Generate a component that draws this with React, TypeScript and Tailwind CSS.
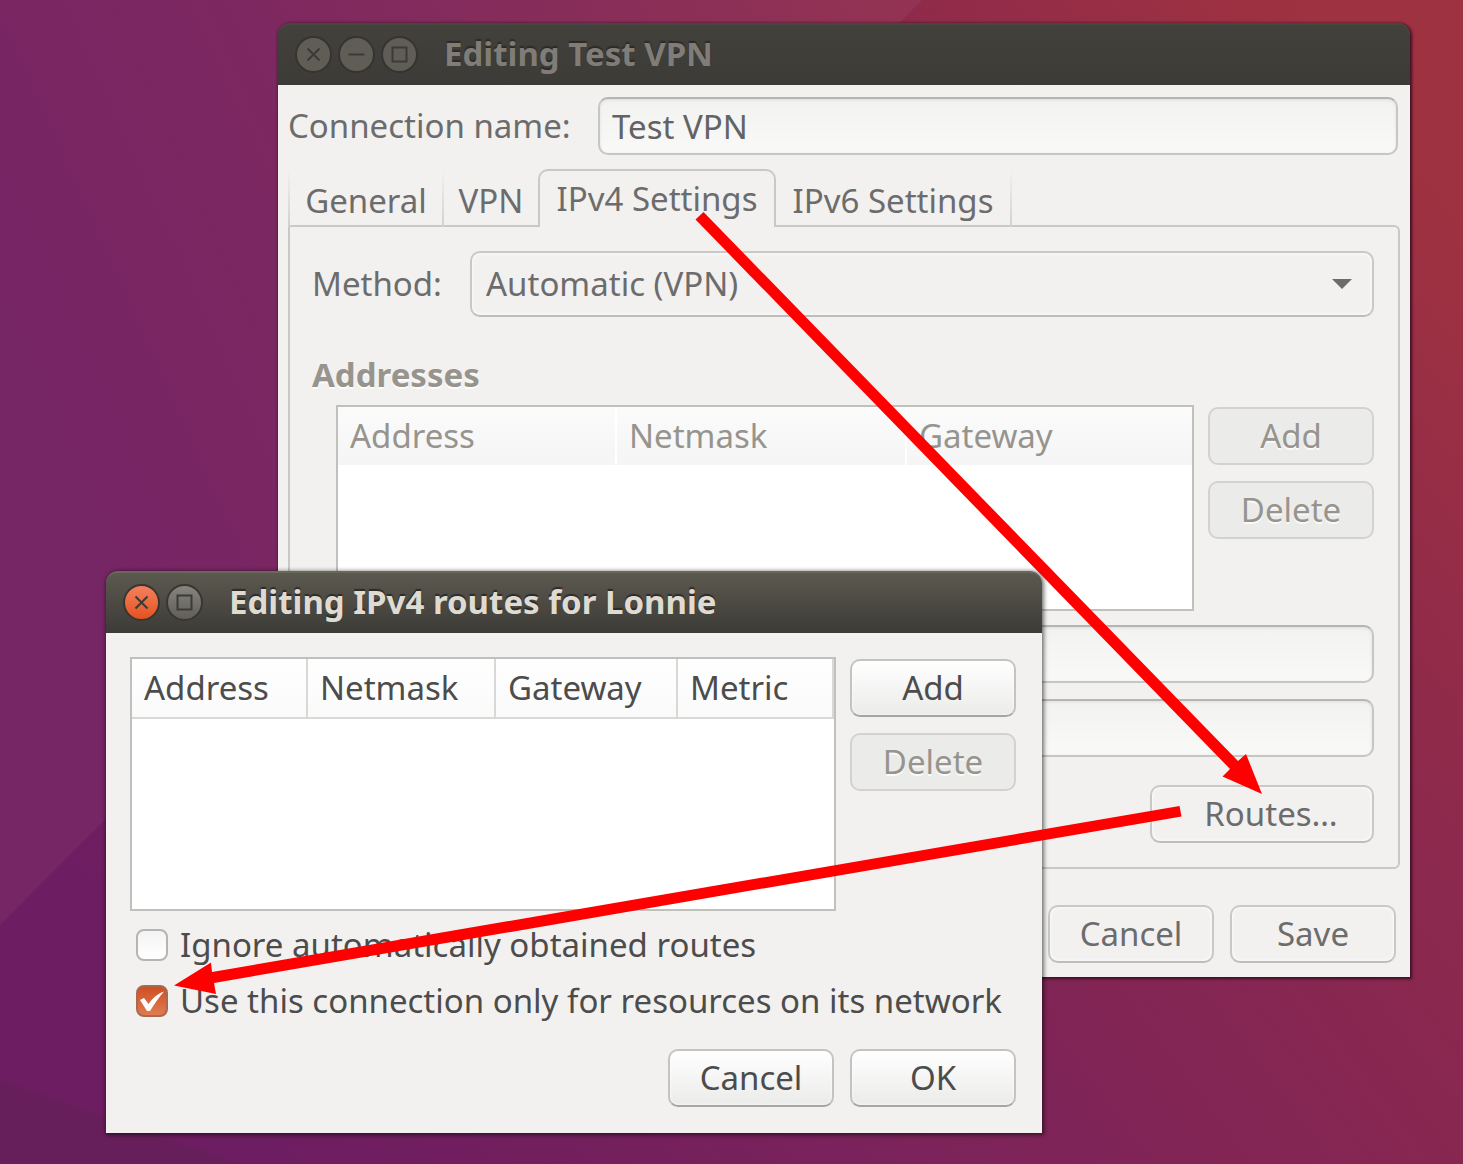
import { useState } from 'react';
import type { ButtonHTMLAttributes, InputHTMLAttributes, ReactNode } from 'react';
import clsx from 'clsx';

type Tone = 'active' | 'backdrop';

function Wallpaper() {
    return (
        <svg className="absolute inset-0 size-full" viewBox="0 0 1463 1164" preserveAspectRatio="none" aria-hidden="true">
            <defs>
                <linearGradient id="base" gradientUnits="userSpaceOnUse" x1="100" y1="900" x2="1300" y2="0">
                    <stop offset="0" stopColor="#6d1d61" />
                    <stop offset="0.4" stopColor="#7e2459" />
                    <stop offset="0.75" stopColor="#8d294c" />
                    <stop offset="1" stopColor="#9f3240" />
                </linearGradient>
                <linearGradient id="facet" gradientUnits="userSpaceOnUse" x1="0" y1="400" x2="900" y2="0">
                    <stop offset="0" stopColor="#762565" />
                    <stop offset="0.4" stopColor="#7d2860" />
                    <stop offset="1" stopColor="#933353" />
                </linearGradient>
            </defs>
            <rect width="1463" height="1164" fill="url(#base)" />
            <polygon points="0,0 922,0 0,925" fill="url(#facet)" />
            <polygon points="0,1080 240,1164 0,1164" fill="#671f5b" />
        </svg>
    );
}

type WindowButtonProps = { kind: 'close' | 'minimize' | 'maximize'; tone: Tone };

function WindowButton({ kind, tone }: WindowButtonProps) {
    const active = tone === 'active';
    return (
        <button
            type="button"
            aria-label={kind}
            className={clsx(
                'flex size-[37px] items-center justify-center rounded-full border-2',
                !active && 'border-[#35342f] bg-[#5f5d55]',
                active && kind === 'close' && 'border-[#383631] bg-linear-to-b from-[#f47f60] via-[#ec6b3d] to-[#e4501f]',
                active && kind !== 'close' && 'border-[#383631] bg-linear-to-b from-[#85847e] to-[#605e57]',
            )}
        >
            <svg width="19" height="19" viewBox="0 0 19 19" fill="none" stroke="#3b3a35" strokeWidth="2">
                {kind === 'close' && <path d="M3.5 3.5l12 12M15.5 3.5l-12 12" />}
                {kind === 'minimize' && <path d="M1.5 9.5h16" />}
                {kind === 'maximize' && <rect x="2.5" y="2.5" width="14" height="14" />}
            </svg>
        </button>
    );
}

function TitleBar({ title, tone, children }: { title: string; tone: Tone; children: ReactNode }) {
    return (
        <header
            className={clsx(
                'flex h-[62px] items-center gap-[26px] rounded-t-xl border-t-2 px-[17px] pb-[2px]',
                tone === 'active'
                    ? 'border-[#69675a] bg-linear-to-b from-[#5b594f] to-[#3d3b37]'
                    : 'border-[#48473f] bg-linear-to-b from-[#42413c] to-[#3c3b37]',
            )}
        >
            <div className="flex gap-[6px]">{children}</div>
            <h2
                className={clsx(
                    'font-bold whitespace-nowrap [text-shadow:0_-2px_1px_#2c2b28]',
                    tone === 'active' ? 'text-[#dfdbd2]' : 'text-[#807d78]',
                )}
            >
                {title}
            </h2>
        </header>
    );
}

type DialogButtonProps = ButtonHTMLAttributes<HTMLButtonElement> & { tone: Tone };

function DialogButton({ tone, disabled, className, ...rest }: DialogButtonProps) {
    return (
        <button
            type="button"
            disabled={disabled}
            className={clsx(
                'h-[58px] min-w-[166px] rounded-[10px] border-2 px-4',
                disabled && 'border-[#d3d2d0] bg-[#ebebea] text-[#97948e] [text-shadow:0_2px_0_#fafafa]',
                !disabled && tone === 'backdrop' && 'border-[#c8c8c6] border-b-[#bdbdbb] bg-[#f2f1f0] text-[#6c6c6c] inset-shadow-[0_0_4px_#ffffff]',
                !disabled && tone === 'active' && 'border-[#c3c3c1] border-b-[#a5a5a3] bg-linear-to-b from-white to-[#ebebea] text-[#4c4c4c] inset-shadow-[0_0_3px_#ffffff]',
                className,
            )}
            {...rest}
        />
    );
}

function TextField({ className, ...rest }: InputHTMLAttributes<HTMLInputElement>) {
    return (
        <input
            type="text"
            className={clsx(
                'h-[58px] min-w-0 rounded-[10px] border-2 border-[#c6c6c4] border-t-[#b5b5b3] bg-linear-to-b from-[#f2f2f1] to-[#f9f9f8] px-3 text-[#636363] inset-shadow-[0_1px_3px_#dededc] outline-none',
                className,
            )}
            {...rest}
        />
    );
}

const tabs = ['General', 'VPN', 'IPv4 Settings', 'IPv6 Settings'];
const tabWidths = ['w-[156px]', 'w-[96px]', 'w-[238px]', 'w-[236px]'];

function ConnectionWindow() {
    const [name, setName] = useState('Test VPN');
    const [tab, setTab] = useState('IPv4 Settings');

    return (
        <section className="absolute top-[23px] right-[53px] left-[278px] rounded-t-xl text-[#6c6c6c] shadow-[1px_1px_3px_1px_#3d0f24]">
            <TitleBar title="Editing Test VPN" tone="backdrop">
                <WindowButton kind="close" tone="backdrop" />
                <WindowButton kind="minimize" tone="backdrop" />
                <WindowButton kind="maximize" tone="backdrop" />
            </TitleBar>

            <div className="bg-[#f2f1f0] px-[10px] pt-3 pb-[14px]">
                <div className="flex items-center pr-[2px]">
                    <label htmlFor="connection-name" className="w-[310px] shrink-0">Connection name:</label>
                    <TextField id="connection-name" className="flex-1" value={name} onChange={(e) => setName(e.target.value)} />
                </div>

                {/* Tabs */}
                <div role="tablist" className="mt-[14px] flex h-[58px] items-end">
                    {tabs.map((item, i) => (
                        <button
                            key={item}
                            type="button"
                            role="tab"
                            aria-selected={item === tab}
                            onClick={() => setTab(item)}
                            className={clsx(
                                'shrink-0 whitespace-nowrap',
                                tabWidths[i],
                                item === tab
                                    ? 'z-10 -ml-[2px] h-[58px] rounded-t-[10px] border-2 border-b-0 border-[#c8c8c6] bg-[#f2f1f0]'
                                    : 'h-[56px] border-r-2 pt-1 [border-image:linear-gradient(#f2f1f0,#d0d0ce)_1] first:border-l-2',
                            )}
                        >
                            {item}
                        </button>
                    ))}
                </div>

                <div className="-mt-[2px] rounded-md rounded-tl-none border-2 border-[#c8c8c6] pt-6 pr-6 pb-6 pl-[22px]">
                    <div className="flex items-center">
                        <label htmlFor="method" className="w-[158px] shrink-0">Method:</label>
                        <div className="relative flex-1">
                            <select
                                id="method"
                                className="h-[66px] w-full appearance-none rounded-[10px] border-2 border-[#c8c8c6] border-b-[#bdbdbb] bg-[#f2f1f0] px-[14px] inset-shadow-[0_0_4px_#ffffff]"
                            >
                                <option>Automatic (VPN)</option>
                            </select>
                            <svg className="pointer-events-none absolute top-7 right-[22px]" width="20" height="10" viewBox="0 0 20 10" fill="#6c6c6c">
                                <path d="M0 0h20L10 10z" />
                            </svg>
                        </div>
                    </div>

                    <h3 className="mt-9 leading-[44px] font-bold text-[#97948e] [text-shadow:0_2px_0_#fcfcfc]">Addresses</h3>

                    <div className="mt-2 flex gap-[14px] pl-6">
                        <div className="h-[206px] flex-1 border-2 border-[#c0c0bd] bg-white">
                            <table className="w-full table-fixed text-left text-[#97948e]">
                                <thead>
                                    <tr className="h-[58px] bg-linear-to-b from-[#fbfbfb] to-[#f5f5f5]">
                                        <th className="w-[278px] border-r-2 border-white pl-3 font-normal">Address</th>
                                        <th className="w-[290px] border-r-2 border-white pl-3 font-normal">Netmask</th>
                                        <th className="pl-3 font-normal">Gateway</th>
                                    </tr>
                                </thead>
                            </table>
                        </div>
                        <div className="flex flex-col gap-4 pt-[2px]">
                            <DialogButton tone="backdrop" disabled>Add</DialogButton>
                            <DialogButton tone="backdrop" disabled>Delete</DialogButton>
                        </div>
                    </div>

                    <div className="mt-[14px] flex flex-col gap-4 pl-[400px]">
                        <TextField aria-label="DNS servers" />
                        <TextField aria-label="Search domains" />
                    </div>

                    <div className="mt-7 flex justify-end">
                        <DialogButton tone="backdrop" className="w-[224px] pl-[34px]">Routes…</DialogButton>
                    </div>
                </div>

                <div className="mt-9 flex justify-end gap-4 pr-1">
                    <DialogButton tone="backdrop">Cancel</DialogButton>
                    <DialogButton tone="backdrop">Save</DialogButton>
                </div>
            </div>
        </section>
    );
}

function CheckOption({ id, label, defaultChecked }: { id: string; label: string; defaultChecked?: boolean }) {
    return (
        <div className="flex h-14 items-center gap-3">
            <div className="relative size-8 shrink-0">
                <input
                    id={id}
                    type="checkbox"
                    defaultChecked={defaultChecked}
                    className="peer block size-8 appearance-none rounded-lg border-2 border-[#b4b4b2] bg-linear-to-b from-[#f3f3f3] to-white checked:border-[#a9694d] checked:from-[#cf4f22] checked:to-[#e07a50]"
                />
                <svg className="pointer-events-none absolute inset-0 hidden peer-checked:block" width="32" height="32" viewBox="0 0 32 32">
                    <path d="M4 15l4-2 4.5 6C16 14 21 9 28 6.500c-5 6-9.500 12-14 19.500h-3z" fill="#fff" />
                </svg>
            </div>
            <label htmlFor={id} className="whitespace-nowrap">{label}</label>
        </div>
    );
}

function RoutesWindow() {
    return (
        <section className="absolute top-[571px] left-[106px] w-[936px] rounded-t-xl text-[#4c4c4c] shadow-[1px_1px_4px_1px_rgb(0_0_0/0.55)]">
            <TitleBar title="Editing IPv4 routes for Lonnie" tone="active">
                <WindowButton kind="close" tone="active" />
                <WindowButton kind="maximize" tone="active" />
            </TitleBar>

            <div className="bg-[#f2f1f0] px-6 pt-6 pb-[26px]">
                <div className="flex gap-[14px] pr-[2px]">
                    <div className="h-[254px] flex-1 border-2 border-[#c0c0bd] bg-white">
                        <table className="w-full table-fixed border-separate border-spacing-0 text-left">
                            <thead>
                                <tr className="h-[60px] bg-linear-to-b from-white to-[#fafafa]">
                                    <th className="w-[176px] border-r-2 border-b-2 border-[#d9d8d5] pl-3 font-normal">Address</th>
                                    <th className="w-[188px] border-r-2 border-b-2 border-[#d9d8d5] pl-3 font-normal">Netmask</th>
                                    <th className="w-[182px] border-r-2 border-b-2 border-[#d9d8d5] pl-3 font-normal">Gateway</th>
                                    <th className="border-r-2 border-b-2 border-[#d9d8d5] pl-3 font-normal">Metric</th>
                                </tr>
                            </thead>
                        </table>
                    </div>
                    <div className="flex flex-col gap-4 pt-[2px]">
                        <DialogButton tone="active">Add</DialogButton>
                        <DialogButton tone="active" disabled>Delete</DialogButton>
                    </div>
                </div>

                <div className="mt-[6px] pl-[6px]">
                    <CheckOption id="ignore-routes" label="Ignore automatically obtained routes" />
                    <CheckOption id="only-resources" label="Use this connection only for resources on its network" defaultChecked />
                </div>

                <div className="mt-5 flex justify-end gap-4 pr-[2px]">
                    <DialogButton tone="active">Cancel</DialogButton>
                    <DialogButton tone="active">OK</DialogButton>
                </div>
            </div>
        </section>
    );
}

export default function App() {
    return (
        <main className="relative min-h-screen overflow-hidden bg-[#7e2459] font-['Noto_Sans',sans-serif] text-[33px] leading-[40px]">
            <Wallpaper />
            <ConnectionWindow />
            <RoutesWindow />

            {/* Arrows: tab -> Routes button -> checkbox */}
            <svg className="pointer-events-none absolute inset-0 z-20 size-full" fill="#ff0000" aria-hidden="true">
                <polygon points="703.5,212 1238,761 1246,754 1262,794 1222.5,776.5 1230,769 695.5,219.5" />
                <polygon points="1179.5,806 212,972 211,962.5 174,985.5 216,994 214,983 1181.5,816.5" />
            </svg>
        </main>
    );
}
